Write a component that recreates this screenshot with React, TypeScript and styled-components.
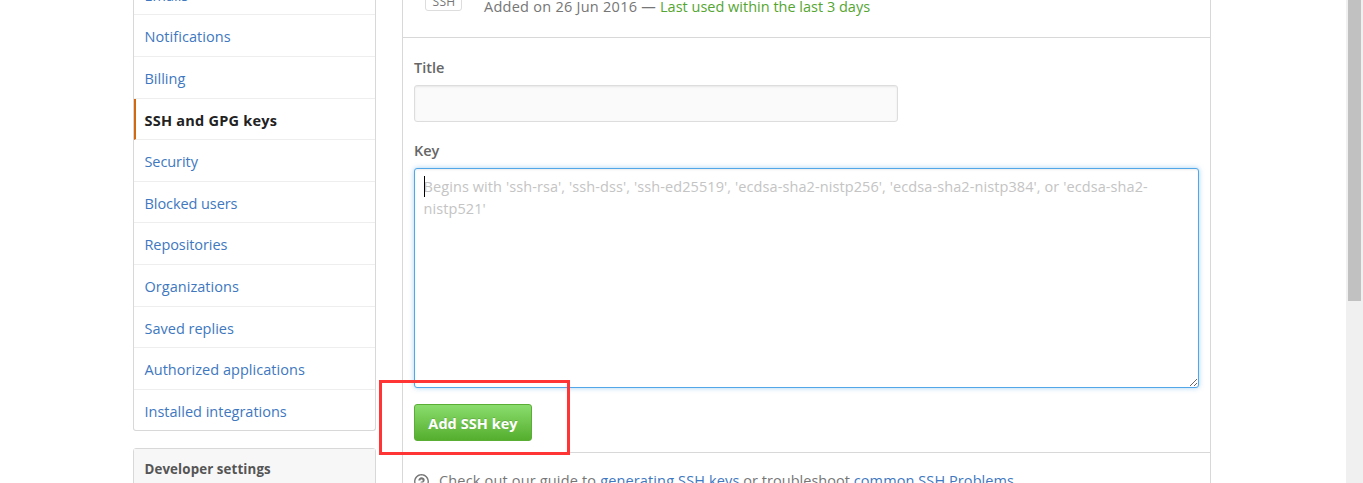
import React from "react";
import styled, { createGlobalStyle } from "styled-components";

const Global = createGlobalStyle`
  * { box-sizing: border-box; }
  html, body { margin: 0; height: 100%; overflow: hidden; background: #fff; }
  body { font-family: "Open Sans", "Noto Sans", sans-serif; font-size: 14.5px; color: #767676; }
`;

const Page = styled.div`
  position: relative;
  display: flex;
  height: 483px;
  overflow: hidden;
  background: #fff;
`;

const Sidebar = styled.aside`
  width: 243px;
  margin: -26.2px 26px 0 133px;
  flex: none;
`;

const Menu = styled.nav`
  border: 1px solid #d8d8d8;
  border-top: 0;
  border-radius: 3px;
  margin-bottom: 17px;
`;

const MenuItem = styled.a<{ $active?: boolean; $track?: number }>`
  display: flex;
  align-items: center;
  height: 41.6px;
  padding: 2.4px 0 0 ${(p) => (p.$active ? 8.5 : 10.5)}px;
  border-bottom: 1px solid #eee;
  border-left: ${(p) => (p.$active ? "2px solid #d26911" : "0")};
  color: ${(p) => (p.$active ? "#222" : "#4078c0")};
  font-weight: ${(p) => (p.$active ? 700 : 400)};
  letter-spacing: ${(p) => p.$track ?? 0}px;
  white-space: nowrap;
  &:last-child { height: 40.6px; border-bottom: 0; }
`;

const MenuPanel = styled.section`
  height: 120px;
  border: 1px solid #d8d8d8;
  border-radius: 3px;
  background: #fff;
`;

const MenuHeading = styled.h3<{ $track?: number }>`
  margin: 0;
  height: 41px;
  padding-left: 10.5px;
  line-height: 41px;
  border-bottom: 1px solid #eee;
  background: #f7f7f7;
  color: #555;
  font-size: 13.3px;
  font-weight: 700;
  letter-spacing: ${(p) => p.$track ?? 0}px;
`;

const Main = styled.main`
  width: 809px;
  flex: none;
  border: solid #d8d8d8;
  border-width: 0 1px;
`;

const KeyRow = styled.div`
  display: flex;
  height: 38px;
  padding-left: 22px;
  border-bottom: 1px solid #d8d8d8;
`;

const Badge = styled.span`
  width: 37px;
  height: 21px;
  margin-top: -10px;
  padding-left: 6.5px;
  border: 1px solid #ddd;
  border-radius: 3px;
  font-size: 12px;
  line-height: 22px;
  letter-spacing: 0.3px;
  color: #767676;
`;

const KeyMeta = styled.div`
  margin-left: 22px;
  margin-top: -4px;
  line-height: 22px;
  white-space: pre;
`;

const Run = styled.span<{ $color?: string; $track?: number }>`
  color: ${(p) => p.$color ?? "inherit"};
  letter-spacing: ${(p) => p.$track ?? 0}px;
`;

const Form = styled.form`
  display: flex;
  flex-direction: column;
  align-items: flex-start;
  height: 415px;
  padding: 19px 11px 0;
  border-bottom: 1px solid #d8d8d8;
`;

const Label = styled.label`
  height: 28px;
  line-height: 22px;
  font-weight: 600;
  color: #666;
`;

const TitleInput = styled.input`
  width: 484px;
  height: 37px;
  margin: 0 0 18px;
  border: 1px solid #ddd;
  border-radius: 3px;
  background: #fafafa;
  box-shadow: inset 0 1px 2px rgba(0, 0, 0, 0.075);
`;

const KeyField = styled.div`
  position: relative;
  display: flex;
  margin-bottom: 16px;
`;

const KeyInput = styled.textarea<{ $track?: number }>`
  width: 785px;
  height: 220px;
  margin: 0;
  padding: 7px 8.5px;
  border: 1px solid #51a7e8;
  border-radius: 3px;
  outline: none;
  background: #fff;
  font: inherit;
  line-height: 22px;
  letter-spacing: ${(p) => p.$track ?? 0}px;
  box-shadow: inset 0 1px 2px rgba(0, 0, 0, 0.075), 0 0 5px rgba(81, 167, 232, 0.5);
  &::placeholder { color: #c4c4c4; opacity: 1; }
`;

const Caret = styled.i`
  position: absolute;
  left: 10px;
  top: 8px;
  width: 1px;
  height: 21px;
  background: #000;
`;

const SubmitButton = styled.button`
  width: 118px;
  height: 37px;
  padding: 2px 0 0;
  border: 1px solid #5aad35;
  border-radius: 3px;
  background: linear-gradient(#8add6d, #55ae2e);
  color: #fff;
  font: inherit;
  font-weight: 700;
  font-size: 14.5px;
  letter-spacing: 0.05px;
  text-shadow: 0 -1px 0 rgba(0, 0, 0, 0.15);
`;

const Help = styled.p`
  display: flex;
  margin: 0;
  padding: 17px 0 0 11px;
  line-height: 22px;
  white-space: pre;
`;

const HelpIcon = styled.svg`
  width: 15px;
  height: 17px;
  margin: 3px 10px 0 0;
  fill: #767676;
`;

const Highlight = styled.div`
  position: absolute;
  left: 379px;
  top: 380px;
  width: 191px;
  height: 75px;
  border: 3px solid #ff3535;
`;

const ScrollTrack = styled.div`
  width: 17px;
  margin-left: auto;
  padding-left: 2px;
  background: #f0f0f0;
`;

const ScrollThumb = styled.div`
  width: 13px;
  height: 301px;
  background: #c1c1c1;
`;

const items: { label: string; track?: number; active?: boolean }[] = [
  { label: "Emails" },
  { label: "Notifications", track: 0.07 },
  { label: "Billing" },
  { label: "SSH and GPG keys", active: true, track: 0.24 },
  { label: "Security", track: -0.08 },
  { label: "Blocked users", track: -0.07 },
  { label: "Repositories", track: -0.08 },
  { label: "Organizations", track: 0.04 },
  { label: "Saved replies" },
  { label: "Authorized applications", track: 0.04 },
  { label: "Installed integrations" },
];

export default function App() {
  return (
    <Page>
      <Global />
      <Sidebar>
        <Menu>
          {items.map((item) => (
            <MenuItem key={item.label} $active={item.active} $track={item.track}>
              {item.label}
            </MenuItem>
          ))}
        </Menu>
        <MenuPanel>
          <MenuHeading $track={0.12}>Developer settings</MenuHeading>
        </MenuPanel>
      </Sidebar>
      <Main>
        <KeyRow>
          <Badge>SSH</Badge>
          <KeyMeta>
            <Run $track={0.26}>Added on 26 Jun 2016 — </Run>
            <Run $color="#55a532">Last used within the last 3 days</Run>
          </KeyMeta>
        </KeyRow>
        <Form>
          <Label htmlFor="title">Title</Label>
          <TitleInput id="title" />
          <Label htmlFor="key">Key</Label>
          <KeyField>
            <KeyInput
              id="key"
              $track={0.09}
              placeholder="Begins with 'ssh-rsa', 'ssh-dss', 'ssh-ed25519', 'ecdsa-sha2-nistp256', 'ecdsa-sha2-nistp384', or 'ecdsa-sha2-nistp521'"
            />
            <Caret />
          </KeyField>
          <SubmitButton type="button">Add SSH key</SubmitButton>
        </Form>
        <Help>
          <HelpIcon viewBox="0 0 14 16">
            <path d="M6 10h2v2H6v-2zm4-3.5C10 8.64 8 9 8 9H6c0-.55.45-1 1-1h.5c.28 0 .5-.22.5-.5v-1c0-.28-.22-.5-.5-.5h-1c-.28 0-.5.22-.5.5V7H4c0-1.5 1.5-3 3-3s3 1 3 2.5zM7 2.3c3.14 0 5.7 2.56 5.7 5.7s-2.56 5.7-5.7 5.7A5.71 5.71 0 0 1 1.3 8c0-3.14 2.56-5.7 5.7-5.7zM7 1C3.14 1 0 4.14 0 8s3.14 7 7 7 7-3.14 7-7-3.14-7-7-7z" />
          </HelpIcon>
          <Run $track={0.17}>Check out our guide to </Run>
          <Run $color="#4078c0" $track={0.14}>generating SSH keys</Run>
          <Run $track={0.03}> or troubleshoot </Run>
          <Run $color="#4078c0" $track={0.09}>common SSH Problems</Run>
          <Run>.</Run>
        </Help>
      </Main>
      <ScrollTrack>
        <ScrollThumb />
      </ScrollTrack>
      <Highlight />
    </Page>
  );
}
